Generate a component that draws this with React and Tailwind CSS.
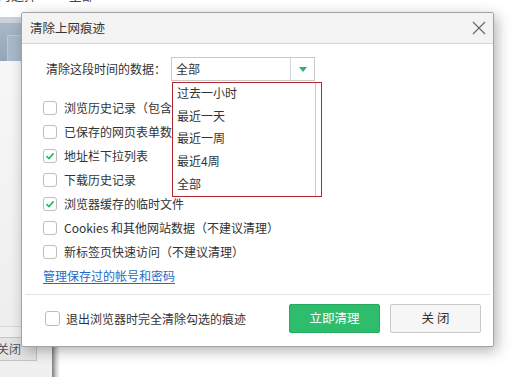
import React from 'react'

const font = { fontFamily: '"Noto Sans CJK SC", "Noto Sans", sans-serif' }

function Box({ checked, size = 'w-[14px] h-[14px]' }) {
  return (
    <span className={`${size} shrink-0 rounded-[3px] border border-[#bdbdbd] bg-white flex items-center justify-center`}>
      {checked && (
        <svg width="10" height="10" viewBox="0 0 10 10">
          <path d="M1.5 5.2 L4 7.6 L8.6 2.4" fill="none" stroke="#2bb46a" strokeWidth="1.6" />
        </svg>
      )}
    </span>
  )
}

const items = [
  { label: '浏览历史记录（包含前进后退列表）', checked: false },
  { label: '已保存的网页表单数据', checked: false },
  { label: '地址栏下拉列表', checked: true },
  { label: '下载历史记录', checked: false },
  { label: '浏览器缓存的临时文件', checked: true },
  { label: 'Cookies 和其他网站数据（不建议清理）', checked: false },
  { label: '新标签页快速访问（不建议清理）', checked: false },
]

const options = ['过去一小时', '最近一天', '最近一周', '最近4周', '全部']

export default function App() {
  return (
    <div className="relative w-[515px] h-[377px] bg-white overflow-hidden text-[#333]" style={font}>
      {/* window behind */}
      <div className="absolute left-[-2px] top-[-14px] text-[13px] leading-[18px] text-[#444] whitespace-nowrap">的选择一 一 全部</div>
      <div className="absolute left-0 top-[17px] w-[22px] h-[44px] flex flex-col">
        <div className="h-[6px] bg-[#c9d3dc]" />
        <div className="flex-1 bg-gradient-to-b from-[#a9b8c7] to-[#93a6b8] flex items-end pl-[7px]">
          <div className="w-full h-[26px] bg-[#a7b8c8] border-t border-l border-[#b9c7d4]" />
        </div>
      </div>
      <div className="absolute left-0 top-[61px] w-[22px] h-[265px] bg-gradient-to-b from-[#f7f7f7] to-[#eeeeee]" />
      <div className="absolute left-0 top-[326px] w-[52px] h-[51px] bg-[#f0f0f0] border-t border-[#d9d9d9]">
        <div className="mt-[10px] ml-[-12px] w-[49px] h-[24px] bg-[#e4e4e4] border border-[#c4c4c4] text-[12px] text-[#555] flex items-center justify-start pl-[8px]">关闭</div>
      </div>
      <div className="absolute left-[52px] top-[335px] w-[8px] h-[42px] bg-gradient-to-r from-[#7b7b7b] via-[#cfcfcf] to-white" />

      {/* dialog */}
      <div className="absolute left-[21px] top-[12px] w-[473px] h-[335px] bg-white border border-[#a3a3a3] rounded-[2px] shadow-[3px_4px_14px_rgba(0,0,0,0.3)] flex flex-col">
        <div className="h-[31px] shrink-0 bg-[#f3f3f3] border-b border-[#d8d8d8] flex items-center justify-between pl-[8px] pr-[7px]">
          <span className="text-[12.5px] text-[#333] leading-none">清除上网痕迹</span>
          <svg width="14" height="14" viewBox="0 0 14 14">
            <path d="M1 1 L13 13 M13 1 L1 13" stroke="#666" strokeWidth="1.1" />
          </svg>
        </div>

        <div className="relative flex-1 flex flex-col">
          <div className="flex items-center pl-[24px] pt-[13px]">
            <span className="w-[125px] text-[12px] leading-none">清除这段时间的数据：</span>
            <div className="w-[144px] h-[24px] border border-[#c9c9c9] flex">
              <span className="flex-1 flex items-center pl-[4px] text-[12px] leading-none">全部</span>
              <span className="w-[24px] border-l border-[#d5d5d5] flex items-center justify-center">
                <svg width="8" height="5" viewBox="0 0 8 5">
                  <path d="M0 0 L8 0 L4 5 Z" fill="#2bb46a" />
                </svg>
              </span>
            </div>
          </div>

          <div className="flex flex-col pl-[21px] mt-[15px]">
            {items.map((it) => (
              <div key={it.label} className="h-[24px] flex items-center gap-[7px]">
                <Box checked={it.checked} />
                <span className="text-[12px] leading-none whitespace-nowrap">{it.label}</span>
              </div>
            ))}
            <div className="h-[24px] flex items-center">
              <span className="text-[12px] leading-none text-[#1d6cc8] underline underline-offset-2">管理保存过的帐号和密码</span>
            </div>
          </div>

          <div className="mx-[3px] mt-[6px] h-px bg-[#e3e3e3]" />

          <div className="flex items-center pt-[9px] pl-[23px] pr-[12px]">
            <Box size="w-[15px] h-[15px]" />
            <span className="ml-[6px] text-[12px] leading-none">退出浏览器时完全清除勾选的痕迹</span>
            <div className="ml-auto flex gap-[10px]">
              <button className="w-[91px] h-[29px] rounded-[2px] bg-[#2ebd6c] border border-[#27a95f] text-white text-[12.5px] leading-none">立即清理</button>
              <button className="w-[91px] h-[29px] rounded-[2px] bg-[#f6f6f6] border border-[#c9c9c9] text-[#333] text-[12.5px] leading-none">关 闭</button>
            </div>
          </div>

          {/* open dropdown list */}
          <div className="absolute left-[150px] top-[38px] w-[150px] h-[115px] border border-[#b3262b] bg-white flex">
            <div className="w-[143px] border-r border-[#c9c9c9] flex flex-col">
              {options.map((o) => (
                <div key={o} className="h-[22.6px] flex items-center pl-[4px] pb-[2px] text-[12px] leading-none">{o}</div>
              ))}
            </div>
          </div>
        </div>
      </div>
    </div>
  )
}
